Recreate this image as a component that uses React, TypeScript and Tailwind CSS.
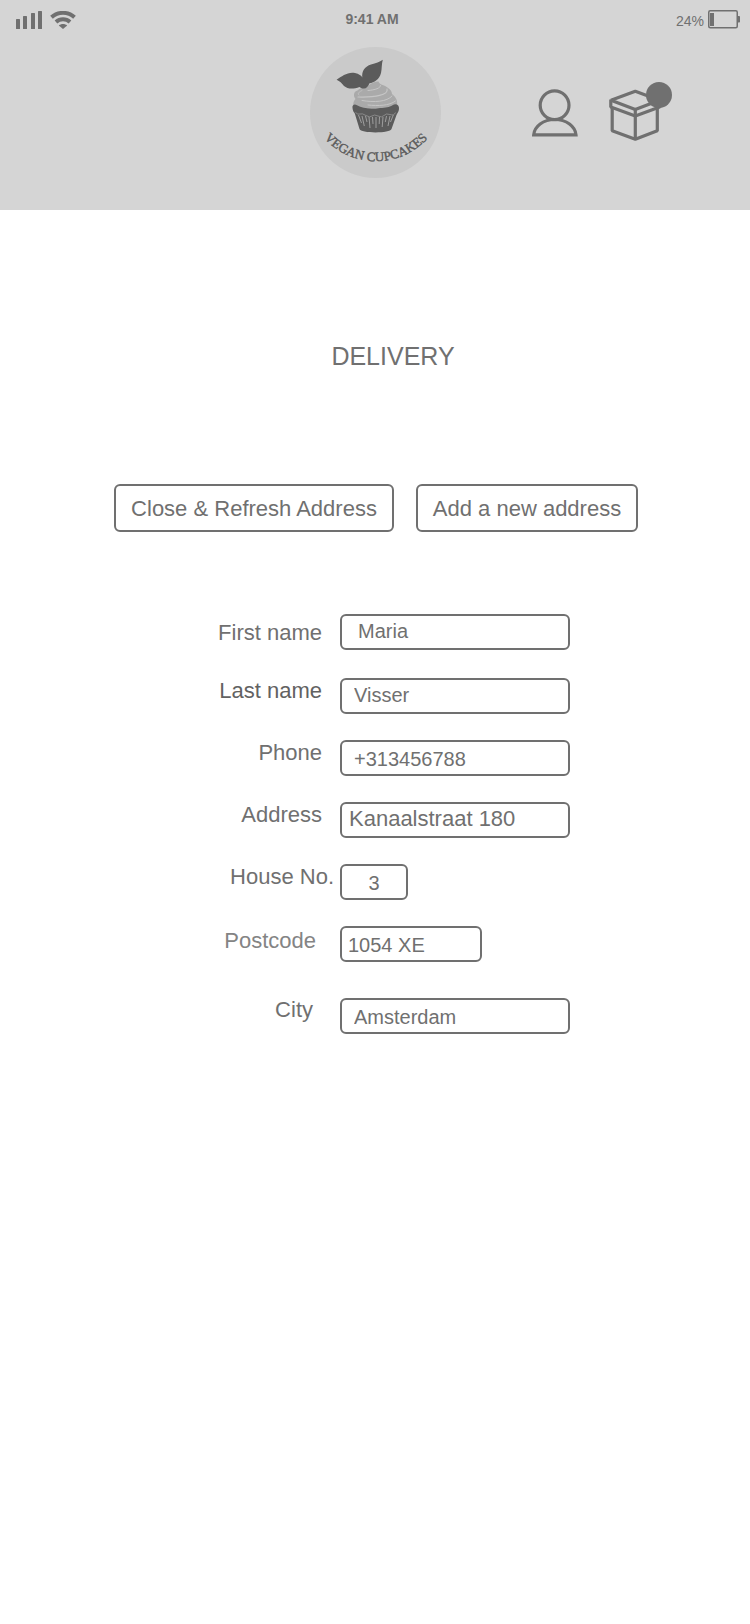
import React from "react";

type Field = {
  id: string;
  label: string;
  value: string;
  labelClass: string;
  inputClass: string;
  rowClass?: string;
};

const fields: Field[] = [
  { id: "first-name", label: "First name", value: "Maria", labelClass: "pt-[7px] pr-[18px]", inputClass: "w-[230px] pl-4 pb-px text-xl" },
  { id: "last-name", label: "Last name", value: "Visser", labelClass: "pt-px pr-[18px] text-[#626262]", inputClass: "w-[230px] pl-3 pb-px text-xl", rowClass: "mt-7" },
  { id: "phone", label: "Phone", value: "+313456788", labelClass: "pt-px pr-[18px]", inputClass: "w-[230px] pl-3 pt-[3px] text-xl", rowClass: "mt-[26px]" },
  { id: "address", label: "Address", value: "Kanaalstraat 180", labelClass: "pt-px pr-[18px]", inputClass: "w-[230px] pl-[7px] pb-[3px] text-[22px]", rowClass: "mt-[26px]" },
  { id: "house-no", label: "House No.", value: "3", labelClass: "pt-px pr-1.5", inputClass: "w-[68px] pt-[3px] text-center text-xl", rowClass: "mt-[26px]" },
  { id: "postcode", label: "Postcode", value: "1054 XE", labelClass: "pt-[3px] pr-6 text-[#848484]", inputClass: "w-[142px] pl-1.5 pt-[3px] text-xl", rowClass: "mt-[26px]" },
  { id: "city", label: "City", value: "Amsterdam", labelClass: "pr-[27px]", inputClass: "w-[230px] pl-3 pt-[3px] text-xl", rowClass: "mt-9" },
];

function SignalIcon() {
  return (
    <svg width="26" height="18" viewBox="0 0 26 18" fill="#707070" aria-hidden="true">
      <rect x="0" y="8" width="4" height="10" rx="0.5" />
      <rect x="7" y="5" width="4" height="13" rx="0.5" />
      <rect x="15" y="2" width="4" height="16" rx="0.5" />
      <rect x="22" y="0" width="4" height="18" rx="0.5" />
    </svg>
  );
}

function WifiIcon() {
  return (
    <svg width="26" height="18" viewBox="0 0 26 18" fill="none" stroke="#707070" aria-hidden="true">
      <path d="M1.500 6.200C8 .4 18 .4 24.500 6.200" strokeWidth="4" />
      <path d="M6 11C10 7.400 16 7.400 20 11" strokeWidth="4" />
      <path d="M13 18L8.800 14.400C11.200 12.400 14.800 12.400 17.200 14.400Z" fill="#707070" stroke="none" />
    </svg>
  );
}

function BatteryIcon() {
  return (
    <svg width="32" height="19" viewBox="0 0 32 19" aria-hidden="true">
      <rect x="0.75" y="0.75" width="28.5" height="17" rx="1.5" fill="none" stroke="#707070" strokeWidth="1.5" />
      <rect x="2" y="3" width="4" height="13" fill="#707070" />
      <rect x="29.5" y="6" width="2.5" height="6.5" rx="0.8" fill="#707070" />
    </svg>
  );
}

function Logo() {
  return (
    <svg width="131" height="131" viewBox="310 47 131 131" role="img" aria-label="Vegan Cupcakes">
      <circle cx="375.5" cy="112.5" r="65.5" fill="#cacaca" />
      <path
        d="M364 88C368 86 374 80.500 378.500 81.500C379 83.500 381 84.500 384 85.500C388.500 87.500 392 90.500 392 94C396 97 398.500 101 396.500 108H354C352.500 104 353.500 101 355.500 99C353 96 353.500 91.500 357.500 90.500C359.500 88.500 361 88 364 88Z"
        fill="#aaaaaa"
      />
      <g fill="none" stroke="#c6c6c6" strokeLinecap="round">
        <path d="M380.500 85.500C381 88 375 90 368 90.500" strokeWidth="1" />
        <path d="M387 89C389 95 375 97.500 358 97" strokeWidth="1.2" />
        <path d="M392 96C387 102 374 102.500 362 100.500" strokeWidth="1" />
        <path d="M395.500 101C389 106 378 106 368 105" strokeWidth="1" />
        <path d="M362 90.500C358.500 92 357 94 359 95" strokeWidth="0.7" />
      </g>
      <path
        d="M336.600 79.800C342 76 348 71.500 355 73C359 74 361.500 75.500 362.300 77.500C361.500 71 365 66.500 371 64.500C376 63 379.500 62 382.800 59.700C381.500 64 382 68.500 381 73C379.500 79.500 374 82.500 369.500 83.300C368 86.500 366.500 88.500 364 88.600C361.500 88.600 360.500 87.500 359.500 87C353 89.500 347.500 89 344 86C341.500 83.500 340 81 336.600 79.800Z"
        fill="#5b5b5b"
      />
      <path
        d="M352.500 108C352 105 354.500 103.500 357 105.300C363 109 372 109 380 108C386 107.500 389 107.500 392.500 105.200C396 102.800 399.500 105 399 109C398.800 111.500 397.500 113 396.500 115L391.500 129C390.500 133.500 360.500 133.500 359.500 129L354.800 113.500C353.500 112 352.800 110.500 352.500 108Z"
        fill="#5b5b5b"
      />
      <path
        d="M355.500 112.500Q358 115 360 114T366 115.500T372 116T378 116T384 115.500T390 114.500T395.500 112.500"
        fill="none"
        stroke="#a8a8a8"
        strokeWidth="0.6"
      />
      <path
        d="M358.500 115L361.500 123M362 116L364.300 126M365.500 116L367 122M369 117L370 128M372.500 117L373 124M376 117V128M379.500 117L379.200 124M383 117L382.200 127M386.500 116L385.300 122M390 116L388 126M393.300 115L390.500 122"
        fill="none"
        stroke="#bababa"
        strokeWidth="0.7"
      />
      <path id="logo-arc" d="M312.200 120A70 70 0 0 0 439.800 120" fill="none" />
      <text
        fill="#5b5b5b"
        stroke="#5b5b5b"
        strokeWidth="0.4"
        fontSize="13"
        textAnchor="middle"
        className="font-['Liberation_Serif',serif]"
      >
        <textPath href="#logo-arc" startOffset="50%">VEGAN CUPCAKES</textPath>
      </text>
    </svg>
  );
}

function PersonIcon() {
  return (
    <svg width="46" height="48" viewBox="0 0 46 48" fill="none" stroke="#707070" strokeWidth="3.200" aria-hidden="true">
      <circle cx="22.600" cy="16.300" r="14.400" />
      <path d="M1.700 45.800H44C43.200 37.500 34.500 30.500 22.800 30.500S2.500 37.500 1.700 45.800Z" />
    </svg>
  );
}

function BoxIcon() {
  return (
    <svg width="64" height="61" viewBox="608 82 64 61" fill="none" stroke="#707070" strokeWidth="3.200" strokeLinejoin="bevel" aria-hidden="true">
      <path d="M635.300 91.200L611 100.200L635.300 109.500L659.500 100.200Z" />
      <path d="M610.800 99.500V107L635.300 116L659.700 107V99.500" />
      <path d="M612.200 107V130.700L635.300 139.300L657.300 130.700V107" />
      <path d="M635.300 109.500V139.300" />
      <circle cx="659" cy="95" r="13" fill="#707070" stroke="none" />
    </svg>
  );
}

export default function App() {
  return (
    <div className="min-h-screen bg-white font-['Liberation_Sans',Arial,sans-serif] text-[#707070]">
      <header className="bg-[#d5d5d5] pb-8">
        <div className="grid h-[47px] grid-cols-3 items-start px-2.5 pt-2.5 text-sm leading-[18px]">
          <div className="flex gap-2 pt-px pl-1.5">
            <SignalIcon />
            <WifiIcon />
          </div>
          <time className="pr-1.5 text-center font-bold">9:41 AM</time>
          <div className="flex justify-end gap-1">
            <span className="pt-0.5">24%</span>
            <BatteryIcon />
          </div>
        </div>
        <div className="grid grid-cols-3 items-center">
          <a href="#home" className="col-start-2 justify-self-center">
            <Logo />
          </a>
          <nav className="flex items-center gap-[30px] pl-8">
            <a href="#account" aria-label="Account">
              <PersonIcon />
            </a>
            <a href="#basket" aria-label="Basket">
              <BoxIcon />
            </a>
          </nav>
        </div>
      </header>

      <main className="pt-[130px] pb-16">
        <h1 className="pl-9 text-center text-[25px] leading-8">DELIVERY</h1>

        <div className="mt-28 flex justify-center gap-[22px] pl-0.5 text-[22px]">
          <button type="button" className="h-12 w-[280px] rounded-md border-2 border-[#707070] whitespace-nowrap">
            Close &amp; Refresh Address
          </button>
          <button type="button" className="h-12 w-[222px] rounded-md border-2 border-[#707070] whitespace-nowrap">
            Add a new address
          </button>
        </div>

        <form className="mt-[82px]">
          {fields.map((f) => (
            <div key={f.id} className={`grid grid-cols-[340fr_410fr] items-start ${f.rowClass ?? ""}`}>
              <label htmlFor={f.id} className={`text-right text-[22px] leading-6 ${f.labelClass}`}>
                {f.label}
              </label>
              <input
                id={f.id}
                type="text"
                defaultValue={f.value}
                className={`h-9 rounded-md border-2 border-[#707070] bg-white ${f.inputClass}`}
              />
            </div>
          ))}
        </form>
      </main>
    </div>
  );
}
